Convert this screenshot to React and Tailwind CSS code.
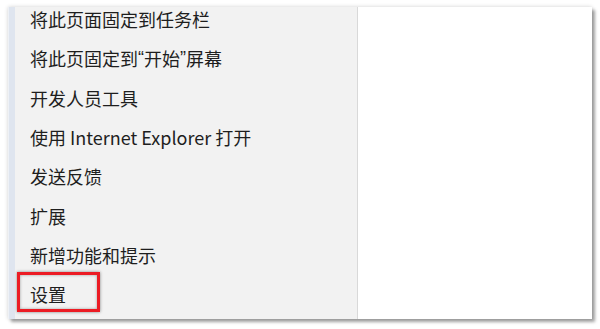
export default function App() {
  const q = (c) => <span style={{ fontFamily: '"Liberation Sans", sans-serif' }}>{c}</span>;
  const items = [
    '将此页面固定到任务栏',
    <>将此页固定到{q('“')}开始{q('”')}屏幕</>,
    '开发人员工具',
    '使用 Internet Explorer 打开',
    '发送反馈',
    '扩展',
    '新增功能和提示',
    '设置',
  ];

  return (
    <div className="w-[600px] h-[329px] bg-white overflow-hidden pt-[7px] pl-[8px]">
      {/* 窗口框 */}
      <div className="w-[584px] h-[312px] flex bg-white shadow-[3px_3px_3px_rgba(0,0,0,0.35),0_0_4px_rgba(0,0,0,0.18)]">
        <div className="w-[7px] h-full bg-[#dfe5ef] border-l border-[#eef1f6]"></div>

        {/* 菜单 */}
        <div className="w-[343px] h-full bg-[#f2f2f2] border-r border-[#d9d9d9] overflow-hidden">
          <div className="mt-[-7px] flex flex-col">
            {items.map((label, i) => (
              <div
                key={i}
                className="h-[39.3px] flex items-center pl-[15px] text-[18px] text-[#1e1e1e] whitespace-nowrap"
                style={{ fontFamily: '"Noto Sans CJK SC", "Noto Sans", sans-serif' }}
              >
                {i === items.length - 1 ? (
                  <span className="relative">
                    <span className="absolute left-[-13px] top-[-9px] w-[83px] h-[40px] border-[3px] border-[#ec1c24] shadow-[0_0_3px_rgba(0,0,0,0.45),inset_0_0_3px_rgba(0,0,0,0.35)]"></span>
                    {label}
                  </span>
                ) : (
                  label
                )}
              </div>
            ))}
          </div>
        </div>

        <div className="flex-1 h-full bg-white"></div>
      </div>
    </div>
  );
}
